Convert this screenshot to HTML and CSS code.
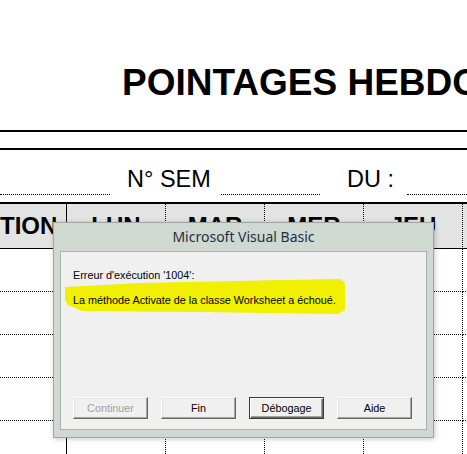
FILE: index.html
```html
<!DOCTYPE html>
<html lang="fr">
<head>
<meta charset="utf-8">
<title>Pointages hebdomadaires</title>
<link rel="stylesheet" href="styles.css">
</head>
<body>
<div class="sheet">
  <h1 class="title">POINTAGES HEBDO</h1>
  <div class="double-rule"></div>
  <div class="info-row">
    <div class="fill"></div>
    <div class="label label-sem">N° SEM</div>
    <div class="fill"></div>
    <div class="label label-du">DU :</div>
    <div class="fill"></div>
  </div>
  <div class="grid">
    <div class="cell head first right-text">TION</div>
    <div class="cell head">LUN</div>
    <div class="cell head">MAR</div>
    <div class="cell head">MER</div>
    <div class="cell head">JEU</div>
    <div class="cell head"></div>

    <div class="cell first"></div><div class="cell"></div><div class="cell"></div><div class="cell"></div><div class="cell"></div><div class="cell"></div>
    <div class="cell first"></div><div class="cell"></div><div class="cell"></div><div class="cell"></div><div class="cell"></div><div class="cell"></div>
    <div class="cell first"></div><div class="cell"></div><div class="cell"></div><div class="cell"></div><div class="cell"></div><div class="cell"></div>
    <div class="cell first"></div><div class="cell"></div><div class="cell"></div><div class="cell"></div><div class="cell"></div><div class="cell"></div>
    <div class="cell first"></div><div class="cell"></div><div class="cell"></div><div class="cell"></div><div class="cell"></div><div class="cell"></div>
  </div>
</div>

<div class="dialog">
  <div class="caption">Microsoft Visual Basic</div>
  <div class="panel">
    <svg class="marker" width="300" height="70" viewBox="0 0 300 70" aria-hidden="true">
      <polygon points="4,35 79,31 222,28 279,27 284,31 284,58 277,62 139,60 21,59 7,53 4,48" fill="#f0f000"/>
    </svg>
    <p class="msg">Erreur d'exécution '1004':</p>
    <p class="msg msg-main">La méthode Activate de la classe Worksheet a échoué.</p>
    <div class="buttons">
      <button class="btn" disabled>Continuer</button>
      <button class="btn">Fin</button>
      <button class="btn btn-default">Débogage</button>
      <button class="btn">Aide</button>
    </div>
  </div>
</div>
</body>
</html>
```

FILE: styles.css
```css
html, body {
  margin: 0;
  padding: 0;
  background: #ffffff;
  overflow: hidden;
}

body {
  width: 467px;
  height: 454px;
  position: relative;
  font-family: "Liberation Sans", Arial, sans-serif;
  color: #000;
}

.sheet {
  width: 467px;
}

.title {
  margin: 0;
  padding: 63px 0 0 122px;
  font-size: 37px;
  line-height: 40px;
  font-weight: bold;
  white-space: nowrap;
}

.double-rule {
  margin-top: 27px;
  height: 16px;
  border-top: 2px solid #000;
  border-bottom: 2px solid #000;
}

.info-row {
  height: 52px;
  box-sizing: border-box;
  padding-bottom: 7px;
  display: grid;
  grid-template-columns: 110px 111px 99px 87px 1fr;
  align-items: end;
}

.fill {
  height: 10px;
  border-bottom: 1px dotted #000;
}

.label {
  font-size: 23.5px;
  line-height: 24px;
  padding-bottom: 4px;
  white-space: nowrap;
}

.label-sem { padding-left: 17px; }
.label-du { padding-left: 27px; }

.grid {
  display: grid;
  grid-template-columns: 67px 99px 99px 99px 99px 99px;
  grid-template-rows: 45px;
  grid-auto-rows: 43px;
  border-top: 2px solid #000;
}

.cell {
  box-sizing: border-box;
  border-right: 1px dotted #000;
  border-bottom: 1px dotted #000;
}

.cell.first {
  border-right: 1px solid #000;
}

.cell.head {
  background: #e3e3e3;
  border-bottom: 1px solid #000;
  font-size: 24px;
  font-weight: bold;
  line-height: 44px;
  text-align: center;
  white-space: nowrap;
}

.right-text {
  text-align: right !important;
  padding-right: 13px;
}

/* Dialog */
.dialog {
  position: absolute;
  left: 53px;
  top: 222px;
  width: 381px;
  height: 216px;
  box-sizing: border-box;
  border: 1px solid #9ea7a1;
  background: #cfd9d2;
  padding: 0 6px 7px 6px;
  display: flex;
  flex-direction: column;
  box-shadow: 1px 1px 5px rgba(0, 0, 0, 0.22);
}

.caption {
  height: 28px;
  line-height: 28px;
  text-align: center;
  font-family: "Noto Sans", "Open Sans", sans-serif;
  font-size: 14px;
  color: #1f2e45;
}

.panel {
  position: relative;
  flex: 1;
  background: #f0f0f0;
  border: 1px solid #a9b2ac;
  padding: 17px 12px 10px 12px;
  display: flex;
  flex-direction: column;
  font-family: "Liberation Sans", Arial, sans-serif;
  font-size: 10.8px;
}

.marker {
  position: absolute;
  left: 0;
  top: 0;
}

.msg {
  position: relative;
  margin: 0;
  line-height: 13px;
  white-space: nowrap;
}

.msg-main {
  margin-top: 12px;
}

.buttons {
  margin-top: auto;
  display: flex;
  gap: 13px;
}

.btn {
  width: 75px;
  height: 22px;
  box-sizing: border-box;
  padding: 0;
  margin: 0;
  font-family: "Liberation Sans", Arial, sans-serif;
  font-size: 10.8px;
  color: #000;
  background: #f0f0f0;
  border: 1px solid;
  border-color: #ffffff #696969 #696969 #ffffff;
  box-shadow: inset -1px -1px 0 #a0a0a0, inset 1px 1px 0 #e3e3e3;
}

.btn:disabled {
  color: #a0a0a0;
}

.btn-default {
  border-color: #3c3c3c;
  box-shadow: inset 1px 1px 0 #ffffff, inset -1px -1px 0 #696969, inset -2px -2px 0 #a0a0a0;
}
```
